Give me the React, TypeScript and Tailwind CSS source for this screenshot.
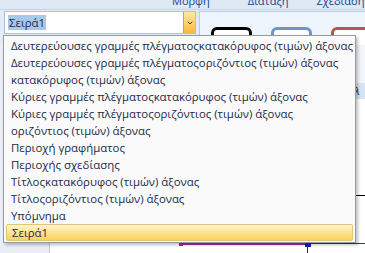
import { ChevronDown } from 'lucide-react'

const items = [
  'Δευτερεύουσες γραμμές πλέγματοςκατακόρυφος (τιμών) άξονας',
  'Δευτερεύουσες γραμμές πλέγματοςοριζόντιος (τιμών) άξονας',
  'κατακόρυφος (τιμών) άξονας',
  'Κύριες γραμμές πλέγματοςκατακόρυφος (τιμών) άξονας',
  'Κύριες γραμμές πλέγματοςοριζόντιος (τιμών) άξονας',
  'οριζόντιος (τιμών) άξονας',
  'Περιοχή γραφήματος',
  'Περιοχής σχεδίασης',
  'Τίτλοςκατακόρυφος (τιμών) άξονας',
  'Τίτλοςοριζόντιος (τιμών) άξονας',
  'Υπόμνημα',
  'Σειρά1',
]

export default function App() {
  return (
    <div
      className="relative w-[365px] h-[253px] overflow-hidden bg-[#dfe9f5] text-[11.4px] text-[#1c2a48]"
      style={{ fontFamily: '"Open Sans", "Noto Sans", sans-serif' }}
    >
      {/* ribbon tab labels, cut off at the top */}
      <div className="h-[9px] overflow-hidden flex text-[#15428b] text-[11px] leading-none">
        <span className="ml-[172px] -mt-[5px]">Μορφή</span>
        <span className="ml-[38px] -mt-[5px]">Διάταξη</span>
        <span className="ml-[28px] -mt-[5px]">Σχεδίαση</span>
      </div>

      {/* combobox + shape styles gallery */}
      <div className="flex h-[36px] border-t border-[#c5d5ea]">
        <div className="w-[200px] pl-[4px] pt-[1px] bg-[#e4ecf7]">
          <div className="flex h-[23px] w-[192px] border border-[#abc1de] bg-white">
            <div className="flex-1 flex items-center pl-[3px]">
              <span className="bg-[#a9c7ec] px-[1px] leading-[15px]">Σειρά1</span>
            </div>
            <div className="w-[12px] flex items-center justify-center border-l border-[#c9a251] bg-gradient-to-b from-[#fde8a6] via-[#fcd36a] to-[#f9b83a]">
              <ChevronDown size={8} strokeWidth={3} className="text-[#4a3a10]" />
            </div>
          </div>
        </div>
        <div className="flex-1 ml-[3px] mt-[1px] border border-[#b9cde6] bg-[#eef4fb] flex gap-[19px] pl-[11px] pt-[15px]">
          <div className="w-[41px] h-[30px] bg-white rounded-[6px] border-[3px] border-black" />
          <div className="w-[41px] h-[30px] bg-white rounded-[6px] border-[3px] border-[#6f93c4]" />
          <div className="w-[41px] h-[30px] bg-white rounded-[6px] border-[3px] border-[#c0504d]" />
        </div>
      </div>

      {/* chart area behind */}
      <div className="flex h-[208px]">
        <div className="w-[50px] bg-[#e9eef4] border-r border-[#c3cedb]" />
        <div className="flex-1 bg-white relative">
          <div className="absolute left-[130px] top-[198px] w-[128px] h-[2px] bg-[#9b2bb0]" />
          <div className="absolute left-[256px] top-[198px] w-[60px] h-[1px] bg-[#2a2ad0]" />
          <div className="absolute left-[255px] top-[196px] w-[6px] h-[6px] bg-[#1a1ad8]" />
          <div className="absolute left-[257px] top-[200px] w-[1px] h-[10px] bg-[#1a1ad8]" />
          <div className="absolute left-[129px] top-[196px] w-[4px] h-[5px] bg-[#9b2bb0]" />
          <div className="absolute left-[300px] top-[0px] w-[15px] h-[40px] bg-[#f2f6fb]" />
          <div className="absolute left-[300px] top-[38px] w-[15px] h-[16px] bg-[#d6e3f3] text-[11px] italic overflow-hidden">
            <span className="-ml-[2px]">ύλ</span>
          </div>
          <div className="absolute left-[300px] top-[150px] w-[15px] h-[1px] bg-black" />
        </div>
      </div>

      {/* dropdown list */}
      <div className="absolute left-[3px] top-[35px] w-[353px] border border-[#9a9a9a] bg-[#fafafa] shadow-[2px_2px_3px_rgba(0,0,0,0.25)] pt-[1px] pb-[1px]">
        {items.map((item, i) =>
          i === items.length - 1 ? (
            <div
              key={i}
              className="mx-[2px] h-[17px] leading-[15px] pl-[5px] border border-[#e3c47a] rounded-[2px] bg-gradient-to-b from-[#fff6cf] via-[#fde390] to-[#fbd25c]"
            >
              {item}
            </div>
          ) : (
            <div key={i} className="h-[17px] leading-[17px] pl-[7px] whitespace-nowrap">
              {item}
            </div>
          )
        )}
      </div>
    </div>
  )
}
